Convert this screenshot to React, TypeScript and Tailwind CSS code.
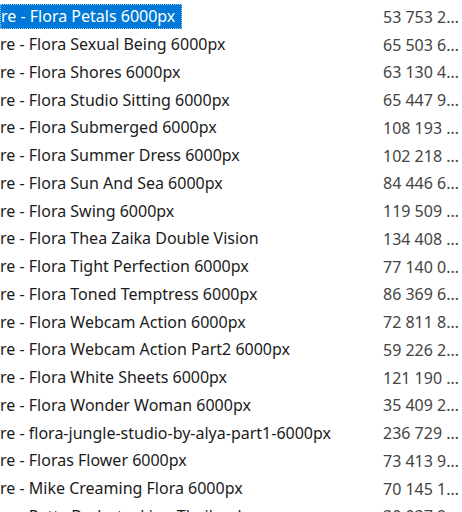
const rows: [string, string][] = [
  ['re - Flora Petals 6000px', '53 753 2…'],
  ['re - Flora Sexual Being 6000px', '65 503 6…'],
  ['re - Flora Shores 6000px', '63 130 4…'],
  ['re - Flora Studio Sitting 6000px', '65 447 9…'],
  ['re - Flora Submerged 6000px', '108 193 …'],
  ['re - Flora Summer Dress 6000px', '102 218 …'],
  ['re - Flora Sun And Sea 6000px', '84 446 6…'],
  ['re - Flora Swing 6000px', '119 509 …'],
  ['re - Flora Thea Zaika Double Vision', '134 408 …'],
  ['re - Flora Tight Perfection 6000px', '77 140 0…'],
  ['re - Flora Toned Temptress 6000px', '86 369 6…'],
  ['re - Flora Webcam Action 6000px', '72 811 8…'],
  ['re - Flora Webcam Action Part2 6000px', '59 226 2…'],
  ['re - Flora White Sheets 6000px', '121 190 …'],
  ['re - Flora Wonder Woman 6000px', '35 409 2…'],
  ['re - flora-jungle-studio-by-alya-part1-6000px', '236 729 …'],
  ['re - Floras Flower 6000px', '73 413 9…'],
  ['re - Mike Creaming Flora 6000px', '70 145 1…'],
  ['re - Petty Bodystocking Thailand', '30 037 9…'],
]

export default function App() {
  return (
    <div
      className="h-[512px] w-[462px] overflow-hidden bg-white pt-[3px] text-[16px]"
      style={{ fontFamily: '"Segoe UI", "Noto Sans", sans-serif' }}
    >
      {rows.map(([name, size], index) => (
        <div key={name} className="flex h-[27.75px] items-center">
          <div className="w-[383px] shrink-0 overflow-hidden whitespace-nowrap">
            {index === 0 ? (
              <span className="inline-block h-[25px] border border-dotted border-[#9fc9f0] bg-[#0078d7] pr-[6px] leading-[23px] text-white">
                {name}
              </span>
            ) : (
              <span className="leading-[25px] text-[#1b1b1b]">{name}</span>
            )}
          </div>
          <div className="whitespace-nowrap text-[#444]">{size}</div>
        </div>
      ))}
    </div>
  )
}
